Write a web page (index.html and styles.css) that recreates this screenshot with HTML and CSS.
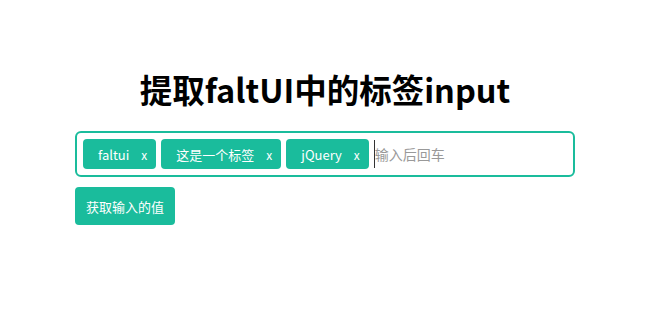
FILE: index.html
```html
<html>
<head>
	<title>faltUI 标签input</title>
	<meta http-equiv="content-type" content="text/html;charset=utf-8">
	<link rel="stylesheet" href="styles.css">
</head>
<body>
	<div class="wrapper">
		<h1 class="title">提取faltUI中的标签input</h1>
		<!-- 标签输入框 -->
		<div class="tag-box">
			<span class="tag">faltui<i class="close">x</i></span>
			<span class="tag">这是一个标签<i class="close">x</i></span>
			<span class="tag">jQuery<i class="close">x</i></span>
			<input type="text" class="tag-input" placeholder="输入后回车">
		</div>
		<button type="button" class="btn">获取输入的值</button>
	</div>
</body>
</html>
```

FILE: styles.css
```css
body {
	margin: 8px;
	font-family: "Noto Sans CJK SC", "Noto Sans", sans-serif;
	background: #fff;
}
.wrapper {
	width: 500px;
	margin: 0 auto;
}
.title {
	margin: 60px 0 21px;
	font-size: 32.5px;
	line-height: 42px;
	font-weight: bold;
	text-align: center;
	color: #000;
}
.tag-box {
	display: flex;
	align-items: center;
	gap: 5px;
	height: 42px;
	padding: 0 6px;
	border: 2px solid #1abc9c;
	border-radius: 6px;
}
.tag {
	display: flex;
	align-items: center;
	height: 30px;
	padding: 0 9px 0 15px;
	background: #1abc9c;
	color: #fff;
	font-size: 13px;
	border-radius: 4px;
}
.close {
	font-style: normal;
	margin-left: 12px;
	font-size: 12px;
	cursor: pointer;
}
.tag-input {
	flex: 1;
	border: none;
	outline: none;
	height: 28px;
	padding: 0;
	border-left: 1px solid #333;
	font-family: inherit;
	font-size: 14px;
}
.tag-input::placeholder {
	color: #999;
}
.btn {
	margin-top: 10px;
	width: 100px;
	height: 38px;
	border: none;
	border-radius: 4px;
	background: #1abc9c;
	color: #fff;
	font-family: inherit;
	font-size: 13px;
	cursor: pointer;
}
```
